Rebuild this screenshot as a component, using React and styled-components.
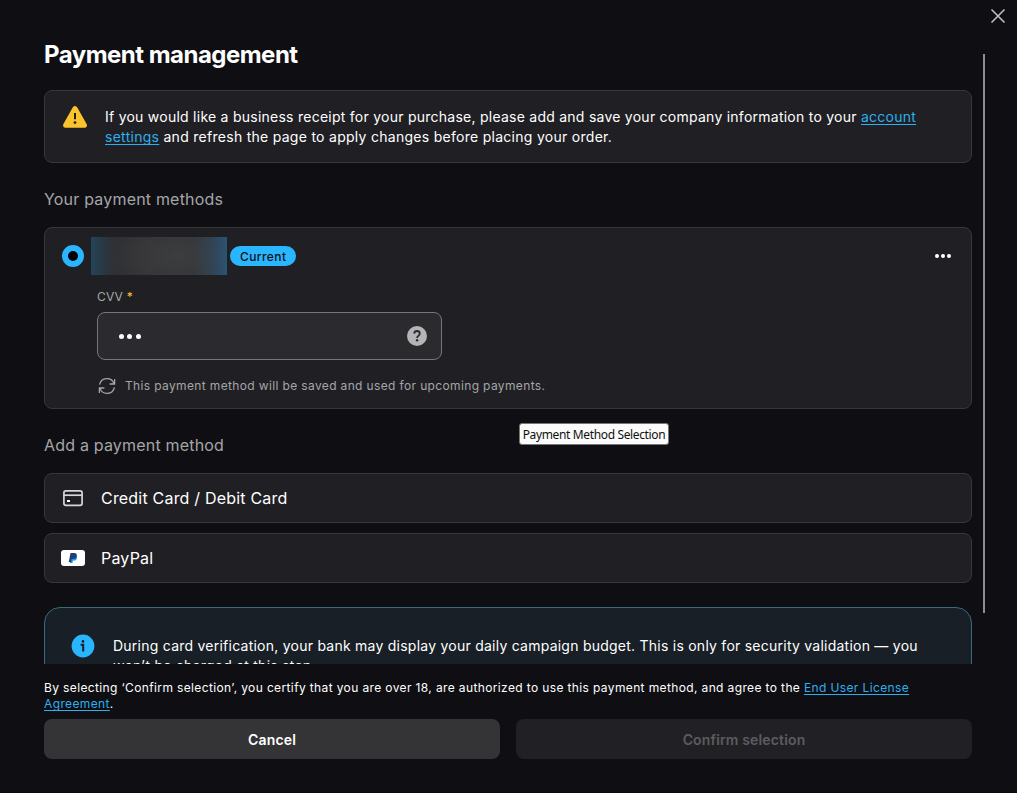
import React from "react";
import styled, { createGlobalStyle } from "styled-components";

const GlobalStyle = createGlobalStyle`
  * { box-sizing: border-box; }
  body {
    margin: 0;
    background: #0f0f13;
    color: #fff;
    font-family: Inter, "Liberation Sans", sans-serif;
    overflow: hidden;
  }
`;

const Dialog = styled.main`
  position: relative;
  display: flex;
  flex-direction: column;
  width: 1017px;
  height: 793px;
  background: #0f0f13;
  border-bottom: 1px solid #09090b;
`;

const CloseButton = styled.button`
  position: absolute;
  top: 6px;
  right: 9px;
  width: 20px;
  height: 20px;
  padding: 0;
  border: 0;
  background: none;
  svg { display: block; }
`;

const Body = styled.div`
  display: flex;
  height: 664px;
  padding-left: 44px;
  overflow: hidden;
`;

const Content = styled.div`
  width: 928px;
  padding-top: 39px;
`;

const Scrollbar = styled.div`
  width: 2px;
  height: 559px;
  margin: 54px 0 0 11px;
  background: #8f8d90;
`;

const Title = styled.h1`
  margin: 0 0 19px;
  font-size: 24px;
  line-height: 32px;
  font-weight: 700;
  letter-spacing: -0.52px;
`;

const SectionTitle = styled.h2`
  margin: 0;
  padding: ${(p) => p.$pad};
  font-size: 16px;
  line-height: 24px;
  font-weight: 400;
  letter-spacing: 0.19px;
  color: #a5a5a8;
`;

const Panel = styled.section`
  border: 1px solid #37373b;
  border-radius: 8px;
  background: #202024;
`;

const Notice = styled(Panel)`
  display: flex;
  gap: 18px;
  height: 73px;
  padding: 15px 18px;
  svg { flex: none; }
`;

const NoticeText = styled.p`
  margin: 0;
  padding-top: 1px;
  font-size: 14px;
  line-height: 20px;
  letter-spacing: 0.25px;
  white-space: nowrap;
`;

const Line = styled.span`
  letter-spacing: ${(p) => p.$spacing}px;
`;

const Link = styled.a`
  color: #2eaeee;
  text-decoration: underline;
  text-decoration-thickness: 1px;
  text-underline-offset: 2px;
  text-decoration-skip-ink: none;
`;

const MethodPanel = styled(Panel)`
  height: 182px;
  padding: 9px 17px 0;
`;

const MethodHeader = styled.div`
  display: flex;
  align-items: center;
  height: 38px;
`;

const Radio = styled.span`
  width: 22px;
  height: 22px;
  border: 6px solid #29b6ff;
  border-radius: 50%;
  background: #000;
`;

const HiddenNumber = styled.span`
  width: 136px;
  height: 38px;
  margin: 0 3px 0 7px;
  background:
    linear-gradient(90deg, #25445a 0%, rgba(37, 68, 90, 0.6) 7%, rgba(37, 68, 90, 0) 18%),
    linear-gradient(270deg, #2b5475 0%, rgba(43, 84, 117, 0.5) 9%, rgba(43, 84, 117, 0) 24%),
    radial-gradient(ellipse 60% 120% at 64% 50%, #3c3d3e 0%, #37373a 50%, #2b2c2f 100%);
`;

const Badge = styled.span`
  height: 20px;
  padding: 0 10px;
  border-radius: 10px;
  background: #29b6ff;
  color: #0f0f13;
  font-size: 12px;
  line-height: 21px;
  font-weight: 500;
  letter-spacing: 0.4px;
`;

const MoreButton = styled.button`
  display: flex;
  gap: 2.4px;
  margin-left: auto;
  padding: 0 3px 0 0;
  border: 0;
  background: none;
`;

const Dot = styled.i`
  width: ${(p) => p.$size}px;
  height: ${(p) => p.$size}px;
  border-radius: 50%;
  background: #fff;
`;

const MethodForm = styled.div`
  padding-left: 35px;
`;

const Label = styled.label`
  display: block;
  margin-top: 14px;
  font-size: 12px;
  line-height: 16px;
  letter-spacing: 0.2px;
  color: #a5a5a8;
`;

const Required = styled.span`
  color: #fcc42c;
`;

const CvvField = styled.div`
  display: flex;
  align-items: center;
  justify-content: space-between;
  width: 345px;
  height: 48px;
  margin-top: 7px;
  padding: 0 14px 0 21px;
  border: 1px solid #77777b;
  border-radius: 8px;
  background: #2b2b2f;
`;

const Mask = styled.span`
  display: flex;
  gap: 3.4px;
  padding-top: 1px;
`;

const SavedNote = styled.div`
  display: flex;
  align-items: center;
  gap: 8px;
  margin-top: 16px;
  height: 20px;
  font-size: 12px;
  line-height: 16px;
  letter-spacing: 0.36px;
  color: #a5a5a8;
`;

const OptionList = styled.div`
  display: flex;
  flex-direction: column;
  gap: 10px;
`;

const Option = styled(Panel)`
  display: flex;
  align-items: center;
  gap: 16px;
  height: 50px;
  padding-left: 16px;
  font-size: 16px;
  line-height: 24px;
  letter-spacing: 0.2px;
`;

const InfoPanel = styled.section`
  display: flex;
  gap: 18px;
  height: 90px;
  margin-top: 24px;
  padding: 26px 26px;
  border: 1px solid #386b7c;
  border-radius: 16px;
  background: #181f26;
  svg { flex: none; }
`;

const InfoText = styled(NoticeText)`
  padding-top: 2px;
  letter-spacing: 0.242px;
`;

const Footer = styled.footer`
  width: 928px;
  margin-left: 44px;
  padding-top: 16px;
`;

const Terms = styled.p`
  margin: 0;
  font-size: 12px;
  line-height: 16px;
  letter-spacing: 0.372px;
  white-space: nowrap;
`;

const Actions = styled.div`
  display: grid;
  grid-template-columns: 1fr 1fr;
  gap: 16px;
  margin-top: 7px;
`;

const Button = styled.button`
  height: 40px;
  padding: 2px 0 0;
  border: 0;
  border-radius: 8px;
  background: ${(p) => (p.disabled ? "#212125" : "#343436")};
  color: ${(p) => (p.disabled ? "#5c5c5f" : "#fff")};
  font-family: inherit;
  font-size: 14px;
  line-height: 20px;
  font-weight: 600;
  letter-spacing: 0.15px;
`;

const Tooltip = styled.div`
  position: absolute;
  left: 519px;
  top: 423px;
  width: 150px;
  height: 22px;
  border: 1px solid #77777b;
  border-radius: 3px;
  background: #fbfbfb;
  color: #111;
  font-family: "Noto Sans", "Open Sans", sans-serif;
  font-size: 12px;
  line-height: 22px;
  letter-spacing: -0.36px;
  text-align: center;
  white-space: nowrap;
`;

const WarningIcon = () => (
  <svg width="24" height="22" viewBox="0 0 24 22">
    <path d="M12 2.6 21.4 19.2H2.6Z" fill="#fcc42c" stroke="#fcc42c" strokeWidth="5" strokeLinejoin="round" />
    <path d="M12 7v6.2" stroke="#202024" strokeWidth="2" />
    <circle cx="12" cy="16.6" r="1.4" fill="#202024" />
  </svg>
);

const HelpIcon = () => (
  <svg width="20" height="20" viewBox="0 0 20 20">
    <circle cx="10" cy="10" r="10" fill="#b5b5b6" />
    <path d="M7.2 7.6C7.3 5.9 8.5 5 10 5s2.8 1 2.8 2.5c0 1.2-.7 1.8-1.5 2.4-.8.6-1.2 1-1.2 2" fill="none" stroke="#2b2b2f" strokeWidth="1.8" />
    <circle cx="10.1" cy="14.2" r="1.2" fill="#2b2b2f" />
  </svg>
);

const RefreshIcon = () => (
  <svg width="20" height="20" viewBox="0 0 20 20" fill="none" stroke="#a5a5a8" strokeWidth="1.3">
    <path d="M2.6 8.6A7.5 7.5 0 0 1 17 7.6M17.6 3v5h-5M17.4 11.4A7.5 7.5 0 0 1 3 12.4M2.4 17v-5h5" />
  </svg>
);

const CardIcon = () => (
  <svg width="24" height="24" viewBox="0 0 24 24" fill="none">
    <rect x="2.9" y="4.9" width="18.2" height="14.4" rx="2" stroke="#d6d6d8" strokeWidth="1.7" />
    <path d="M3 9.2h18" stroke="#d6d6d8" strokeWidth="1.7" />
    <path d="M6 15h3" stroke="#fff" strokeWidth="2" />
  </svg>
);

const PayPalIcon = () => (
  <svg width="24" height="16" viewBox="0 0 24 16">
    <rect width="24" height="16" rx="3" fill="#fff" />
    <path d="M10.2 5h3.6c2 0 2.7 1.3 2.2 3.2-.4 1.6-1.5 2.3-3.2 2.3h-.9L11.5 13H8.9z" fill="#179bd7" />
    <path d="M9.5 3h3.7c2 0 2.9 1.2 2.5 3-.4 2-1.7 2.9-3.7 2.9h-1.4L10 12H7.8z" fill="#253b80" />
  </svg>
);

const InfoIcon = () => (
  <svg width="24" height="24" viewBox="0 0 24 24">
    <circle cx="12" cy="12" r="11.4" fill="#29b6ff" />
    <circle cx="12" cy="7.4" r="1.3" fill="#181f26" />
    <path d="M9.6 10.8h2.6v6.6" fill="none" stroke="#181f26" strokeWidth="2" />
  </svg>
);

export default function App() {
  return (
    <>
      <GlobalStyle />
      <Dialog>
        <Body>
          <Content>
            <Title>Payment management</Title>
            <Notice>
              <WarningIcon />
              <NoticeText>
                If you would like a business receipt for your purchase, please add and save your company information to your <Link>account</Link>
                <br />
                <Line $spacing={0.28}>
                  <Link>settings</Link> and refresh the page to apply changes before placing your order.
                </Line>
              </NoticeText>
            </Notice>
            <SectionTitle $pad="24px 0 16px">Your payment methods</SectionTitle>
            <MethodPanel>
              <MethodHeader>
                <Radio />
                <HiddenNumber />
                <Badge>Current</Badge>
                <MoreButton aria-label="More">
                  <Dot $size={3.8} />
                  <Dot $size={3.8} />
                  <Dot $size={3.8} />
                </MoreButton>
              </MethodHeader>
              <MethodForm>
                <Label>
                  CVV <Required>*</Required>
                </Label>
                <CvvField>
                  <Mask>
                    <Dot $size={5} />
                    <Dot $size={5} />
                    <Dot $size={5} />
                  </Mask>
                  <HelpIcon />
                </CvvField>
                <SavedNote>
                  <RefreshIcon />
                  This payment method will be saved and used for upcoming payments.
                </SavedNote>
              </MethodForm>
            </MethodPanel>
            <SectionTitle $pad="24px 0 16px">Add a payment method</SectionTitle>
            <OptionList>
              <Option>
                <CardIcon />
                Credit Card / Debit Card
              </Option>
              <Option>
                <PayPalIcon />
                PayPal
              </Option>
            </OptionList>
            <InfoPanel>
              <InfoIcon />
              <InfoText>
                During card verification, your bank may display your daily campaign budget. This is only for security validation — you
                <br />
                won’t be charged at this step.
              </InfoText>
            </InfoPanel>
          </Content>
          <Scrollbar />
        </Body>
        <Footer>
          <Terms>
            By selecting ‘Confirm selection’, you certify that you are over 18, are authorized to use this payment method, and agree to the <Link>End User License</Link>
            <br />
            <Link>Agreement</Link>.
          </Terms>
          <Actions>
            <Button>Cancel</Button>
            <Button disabled>Confirm selection</Button>
          </Actions>
        </Footer>
        <CloseButton aria-label="Close">
          <svg width="20" height="20" viewBox="0 0 20 20" stroke="#c4c4c6" strokeWidth="1.5">
            <path d="M3.5 3.5 16.5 16.5M16.5 3.5 3.5 16.5" />
          </svg>
        </CloseButton>
        <Tooltip>Payment Method Selection</Tooltip>
      </Dialog>
    </>
  );
}
